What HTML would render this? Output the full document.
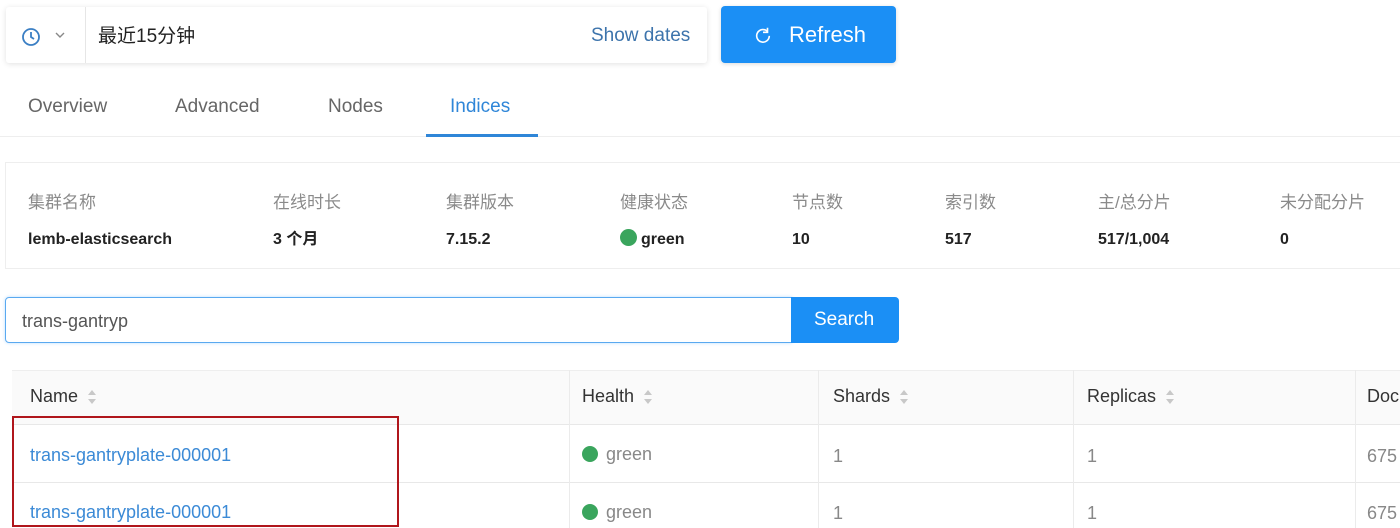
<!DOCTYPE html>
<html><head><meta charset="utf-8"><style>
*{box-sizing:border-box;margin:0;padding:0}
body{width:1400px;height:528px;overflow:hidden;background:#fff;font-family:"Liberation Sans","Noto Sans CJK SC",sans-serif;position:relative;color:#333}
.a,.lab,.val,.th,.td,.lk{line-height:22px;white-space:nowrap}
.a{position:absolute}
.lab{position:absolute;top:192px;font-size:17px;color:#8a8a8a}
.val{position:absolute;top:229px;font-size:16px;font-weight:bold;color:#222}
.th{position:absolute;top:385px;font-size:18px;color:#333}
.sort{display:inline-block;margin-left:10px;vertical-align:middle;width:8px;height:16px;position:relative}
.sort:before{content:"";position:absolute;left:0;top:1px;border:4px solid transparent;border-bottom:5px solid #c8c8c8;border-top:0}
.sort:after{content:"";position:absolute;left:0;top:10px;border:4px solid transparent;border-top:5px solid #c8c8c8;border-bottom:0}
.vl{position:absolute;width:1px;background:#ebebeb}
.td{position:absolute;font-size:18px;color:#888}
.lk{position:absolute;font-size:18px;color:#3b8ad6;left:30px}
.dot{display:inline-block;width:16px;height:16px;border-radius:50%;background:#3aa55d;vertical-align:-2px;margin-right:8px}
</style></head><body>
<div class="a" style="left:6px;top:7px;width:701px;height:56px;background:#fff;box-shadow:0 1px 6px rgba(0,0,0,.12);border-radius:3px"></div>
<svg class="a" style="left:20px;top:26px" width="22" height="22" viewBox="0 0 22 22"><circle cx="11" cy="11" r="8" fill="none" stroke="#3b7fc4" stroke-width="1.8"/><path d="M11 6v5l3 2" fill="none" stroke="#3b7fc4" stroke-width="1.8"/></svg>
<svg class="a" style="left:54px;top:31px" width="12" height="8" viewBox="0 0 12 8"><path d="M2 2l4 4 4-4" fill="none" stroke="#888" stroke-width="1.4"/></svg>
<div class="a" style="left:85px;top:7px;width:1px;height:56px;background:#e6e6e6"></div>
<div class="a" style="left:98px;top:26px;font-size:19px;color:#222">最近15分钟</div>
<div class="a" style="left:591px;top:25px;font-size:19px;color:#3d74ac">Show dates</div>
<div class="a" style="left:721px;top:6px;width:175px;height:57px;background:#1b8ff5;border-radius:4px;box-shadow:0 1px 4px rgba(0,0,0,.15)"></div>
<svg class="a" style="left:754px;top:26px" width="18" height="18" viewBox="0 0 20 20"><path d="M15 6A7 7 0 1 0 17 11" fill="none" stroke="#fff" stroke-width="1.8"/><path d="M15 2v5h-5" fill="none" stroke="#fff" stroke-width="1.8"/></svg>
<div class="a" style="left:789px;top:24px;font-size:22px;color:#fff">Refresh</div>
<div class="a" style="left:28px;top:96px;font-size:19px;color:#666">Overview</div>
<div class="a" style="left:175px;top:96px;font-size:19px;color:#666">Advanced</div>
<div class="a" style="left:328px;top:96px;font-size:19px;color:#666">Nodes</div>
<div class="a" style="left:450px;top:96px;font-size:19px;color:#2f86d8">Indices</div>
<div class="a" style="left:0;top:136px;width:1400px;height:1px;background:#eee"></div>
<div class="a" style="left:426px;top:134px;width:112px;height:3px;background:#2f86d8"></div>
<div class="a" style="left:5px;top:162px;width:1400px;height:107px;border:1px solid #eee"></div>
<div class="lab" style="left:28px">集群名称</div><div class="val" style="left:28px">lemb-elasticsearch</div>
<div class="lab" style="left:273px">在线时长</div><div class="val" style="left:273px">3 个月</div>
<div class="lab" style="left:446px">集群版本</div><div class="val" style="left:446px">7.15.2</div>
<div class="lab" style="left:620px">健康状态</div><div class="val" style="left:620px"><span class="dot" style="width:17px;height:17px;margin-right:4px"></span>green</div>
<div class="lab" style="left:792px">节点数</div><div class="val" style="left:792px">10</div>
<div class="lab" style="left:945px">索引数</div><div class="val" style="left:945px">517</div>
<div class="lab" style="left:1098px">主/总分片</div><div class="val" style="left:1098px">517/1,004</div>
<div class="lab" style="left:1280px">未分配分片</div><div class="val" style="left:1280px">0</div>
<div class="a" style="left:5px;top:297px;width:787px;height:46px;border:1px solid #5aa9f0;border-radius:4px 0 0 4px;box-shadow:0 0 3px rgba(24,144,255,.3)"></div>
<div class="a" style="left:22px;top:310px;font-size:18px;color:#555">trans-gantryp</div>
<div class="a" style="left:791px;top:297px;width:108px;height:46px;background:#1b8ff5;border-radius:0 4px 4px 0"></div>
<div class="a" style="left:814px;top:309px;font-size:19px;color:#fff">Search</div>
<div class="a" style="left:12px;top:370px;width:1388px;height:55px;background:#fafafa;border-top:1px solid #eee;border-bottom:1px solid #e8e8e8"></div>
<div class="a" style="left:12px;top:482px;width:1388px;height:1px;background:#e8e8e8"></div>
<div class="vl" style="left:569px;top:370px;height:158px"></div>
<div class="vl" style="left:818px;top:370px;height:158px"></div>
<div class="vl" style="left:1073px;top:370px;height:158px"></div>
<div class="vl" style="left:1355px;top:370px;height:158px"></div>
<div class="th" style="left:30px">Name<span class="sort"></span></div>
<div class="th" style="left:582px">Health<span class="sort"></span></div>
<div class="th" style="left:833px">Shards<span class="sort"></span></div>
<div class="th" style="left:1087px">Replicas<span class="sort"></span></div>
<div class="th" style="left:1367px">Doc</div>
<div class="lk" style="top:444px">trans-gantryplate-000001</div>
<div class="lk" style="top:501px">trans-gantryplate-000001</div>
<div class="td" style="left:582px;top:443px"><span class="dot"></span>green</div>
<div class="td" style="left:582px;top:501px"><span class="dot"></span>green</div>
<div class="td" style="left:833px;top:445px">1</div><div class="td" style="left:833px;top:502px">1</div>
<div class="td" style="left:1087px;top:445px">1</div><div class="td" style="left:1087px;top:502px">1</div>
<div class="td" style="left:1367px;top:445px">675</div><div class="td" style="left:1367px;top:502px">675</div>
<div class="a" style="left:12px;top:416px;width:387px;height:111px;border:2px solid #b0161c"></div>
</body></html>
